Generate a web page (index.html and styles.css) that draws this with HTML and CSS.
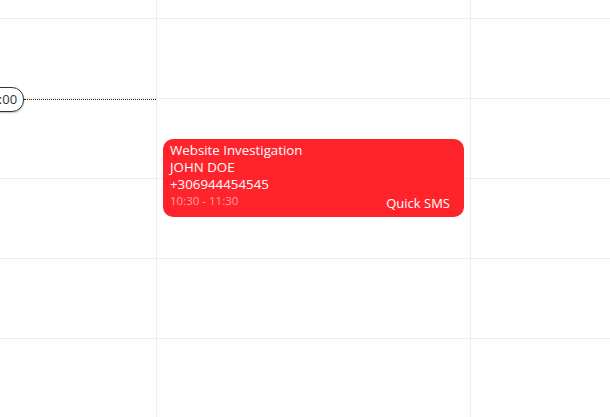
FILE: index.html
```html
<!DOCTYPE html>
<html>
<head>
<meta charset="utf-8">
<link rel="stylesheet" href="styles.css">
</head>
<body>
<div class="calendar">
  <div class="grid">
    <div class="cell top"></div><div class="cell top"></div><div class="cell top"></div>
    <div class="cell"></div><div class="cell"></div><div class="cell"></div>
    <div class="cell"></div><div class="cell"></div><div class="cell"></div>
    <div class="cell"></div><div class="cell"></div><div class="cell"></div>
    <div class="cell"></div><div class="cell"></div><div class="cell"></div>
    <div class="cell"></div><div class="cell"></div><div class="cell"></div>
  </div>
  <div class="now">
    <span class="now-pill">10:00</span>
    <span class="now-line"></span>
  </div>
  <div class="event">
    <div class="event-title">Website Investigation</div>
    <div class="event-line">JOHN DOE</div>
    <div class="event-line">+306944454545</div>
    <div class="event-foot">
      <span class="event-time">10:30 - 11:30</span>
      <span class="event-sms">Quick SMS</span>
    </div>
  </div>
</div>
</body>
</html>
```

FILE: styles.css
```css
html, body {
  margin: 0;
  padding: 0;
  background: #fff;
  overflow: hidden;
}
body {
  font-family: "Open Sans", "Noto Sans", sans-serif;
}
.calendar {
  position: relative;
  width: 610px;
  height: 417px;
  overflow: hidden;
}
.grid {
  display: grid;
  grid-template-columns: 156px 313px 1fr;
  grid-template-rows: 18px repeat(5, 79px);
  column-gap: 1px;
  row-gap: 1px;
  background: #eeeeee;
  height: 417px;
}
.cell {
  background: #fff;
}
.now {
  position: absolute;
  left: 0;
  top: 87px;
  width: 156px;
  display: flex;
  align-items: center;
}
.now-pill {
  margin-left: -24px;
  box-sizing: border-box;
  height: 25px;
  padding: 0 6px 0 7px;
  border: 1px solid #333;
  border-radius: 12px;
  font-size: 13px;
  line-height: 23px;
  color: #333;
  background: #fff;
  box-shadow: 0 1px 2px rgba(0,0,0,0.25);
}
.now-line {
  flex: 1;
  border-top: 1px dotted #222;
}
.event {
  position: absolute;
  left: 163px;
  top: 139px;
  width: 301px;
  height: 78px;
  box-sizing: border-box;
  padding: 3px 14px 0 7px;
  background: #ff242b;
  border-radius: 10px;
  color: #fff;
  font-size: 13.3px;
  line-height: 17px;
  display: flex;
  flex-direction: column;
}
.event-foot {
  display: flex;
  justify-content: space-between;
  align-items: flex-end;
}
.event-time {
  font-size: 11.5px;
  line-height: 15px;
  color: #ff9fa2;
}
.event-sms {
  font-size: 13px;
  line-height: 16px;
  margin-bottom: -3px;
}
```
